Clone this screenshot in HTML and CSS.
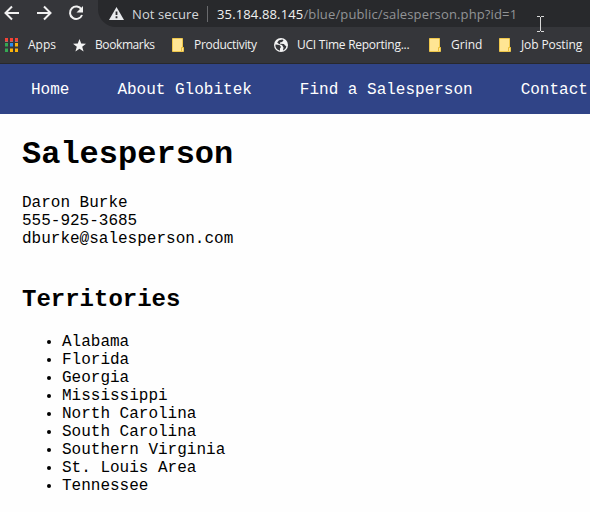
FILE: index.html
```html
<!DOCTYPE html>
<html lang="en">
<head>
<meta charset="utf-8">
<title>Salesperson</title>
<link rel="stylesheet" href="styles.css">
</head>
<body>
<header class="browser">
  <div class="toolbar">
    <svg class="nav-icons" width="98" height="27" viewBox="0 0 98 27" fill="none" stroke="#f1f1f1" stroke-width="2">
      <path d="M19 13H6M12 6.500L5.500 13l6.500 6.500M37 13h13M44 6.500l6.500 6.500-6.500 6.500"/>
      <path d="M81.500 9.500A6.200 6.200 0 1 0 82 15"/>
      <path d="M83 6v6.500h-6.500z" fill="#f1f1f1" stroke="none"/>
    </svg>
    <div class="address">
      <svg class="warning" width="15" height="13" viewBox="0 0 15 13"><path d="M7.500 0L15 13H0z" fill="#e8eaed"/><path d="M7.500 4.500v3.500M7.500 9.300v2" stroke="#28292c" stroke-width="1.800"/></svg>
      <span class="security">Not secure</span>
      <span class="divider"></span>
      <span class="url"><b class="host">35.184.88.145</b><span class="path">/blue/public/salesperson.php?id=1</span></span>
    </div>
    <svg class="cursor" width="7" height="16" viewBox="0 0 7 16" fill="none" stroke="#d8d8d8"><path d="M0 .5h3M4 .5h3M3.500 1v14M0 15.500h3M4 15.500h3"/></svg>
  </div>
  <nav class="bookmarks">
    <span class="bookmark apps">
      <svg width="13" height="14" viewBox="0 0 13 14"><path d="M0 0h3v3H0zM5 0h3v3H5zM10 0h3v3h-3z" fill="#f44336"/><path d="M0 5h3v3.500H0z" fill="#34a853"/><path d="M5 5h3v3.500H5z" fill="#2b8cf0"/><path d="M10 5h3v3.500h-3zM5 10.500h3V14H5zM10 10.500h3V14h-3z" fill="#fbb30b"/><path d="M0 10.500h3V14H0z" fill="#34a853"/><path d="M0 3.500h3M5 3.500h3M10 3.500h3" stroke="#a57070"/></svg>
      <span class="label">Apps</span>
    </span>
    <span class="bookmark starred">
      <svg width="13" height="13" viewBox="0 0 13 13"><path d="M6.500 0l1.700 4.500 4.800.2-3.800 3 1.400 4.800-4.100-2.800-4.100 2.800 1.400-4.800-3.800-3 4.800-.2z" fill="#f4f4f4"/></svg>
      <span class="label">Bookmarks</span>
    </span>
    <span class="bookmark productivity">
      <svg width="12" height="14" viewBox="0 0 12 14"><path d="M.5.5h10v9h1v4H.5z" fill="#ffe593" stroke="#efc74b"/><path d="M9.500 13V9.500h2" fill="none" stroke="#e9bd36"/></svg>
      <span class="label">Productivity</span>
    </span>
    <span class="bookmark reporting">
      <svg width="14" height="14" viewBox="0 0 14 14"><circle cx="7" cy="7" r="7" fill="#f3f3f3"/><path d="M1.500 6.500l4 .5 1.500 2-1 1.500v2.200C3 12 1 9.500 1.500 6.500zM5 2.200L8.500 1.500l1 1-1.500 1.500-2 .5v1.200l4 .3 1 1.500 1.300.5c0 2-1.500 3.700-3.300 4.500L9.500 9.500 8 7 5 6 3.200 4.500z" fill="#35363a"/></svg>
      <span class="label">UCI Time Reporting...</span>
    </span>
    <span class="bookmark grind">
      <svg width="12" height="14" viewBox="0 0 12 14"><path d="M.5.5h10v9h1v4H.5z" fill="#ffe593" stroke="#efc74b"/><path d="M9.500 13V9.500h2" fill="none" stroke="#e9bd36"/></svg>
      <span class="label">Grind</span>
    </span>
    <span class="bookmark jobs">
      <svg width="12" height="14" viewBox="0 0 12 14"><path d="M.5.5h10v9h1v4H.5z" fill="#ffe593" stroke="#efc74b"/><path d="M9.500 13V9.500h2" fill="none" stroke="#e9bd36"/></svg>
      <span class="label">Job Posting</span>
    </span>
  </nav>
</header>
<nav class="site-nav">
  <a>Home</a><a>About Globitek</a><a>Find a Salesperson</a><a>Contact</a>
</nav>
<main class="content">
  <h1>Salesperson</h1>
  <address>Daron Burke<br>555-925-3685<br>dburke@salesperson.com</address>
  <h2>Territories</h2>
  <ul>
    <li>Alabama</li>
    <li>Florida</li>
    <li>Georgia</li>
    <li>Mississippi</li>
    <li>North Carolina</li>
    <li>South Carolina</li>
    <li>Southern Virginia</li>
    <li>St. Louis Area</li>
    <li>Tennessee</li>
  </ul>
</main>
</body>
</html>
```
FILE: styles.css
```css
* { box-sizing: border-box; }
body {
  margin: 0;
  height: 512px;
  overflow: hidden;
  background: #fefefe;
  color: #000;
  font: 16px/18px "Liberation Mono", monospace;
}
svg { display: block; flex: none; }
.browser {
  height: 64px;
  background: #35363a;
  border-bottom: 1px solid #28292c;
  font-family: "Open Sans", "Noto Sans", sans-serif;
  white-space: nowrap;
}
.toolbar { position: relative; display: flex; height: 27px; }
.address {
  display: flex;
  flex: 1;
  align-items: center;
  height: 27px;
  padding-left: 11px;
  background: #28292c;
  border-bottom-left-radius: 18px;
  font-size: 13px;
  line-height: 26px;
}
.security { width: 67px; margin-left: 8px; color: #d5d7da; letter-spacing: .1px; }
.divider { width: 1px; height: 16px; margin: 0 9px 0 8px; background: #696a6d; }
.url { color: #929496; letter-spacing: .14px; }
.host { color: #f1f1f1; font-weight: 400; }
.cursor { position: absolute; left: 537px; top: 16px; }
.bookmarks { display: flex; height: 36px; padding-left: 5px; color: #f1f1f1; font-size: 12px; line-height: 36px; }
.bookmark { display: flex; flex: none; align-items: center; gap: 10px; }
.apps { width: 68px; }
.starred { width: 99px; gap: 9px; letter-spacing: -.4px; }
.starred .label { letter-spacing: -.4px; }
.productivity { width: 102px; letter-spacing: -.3px; }
.reporting { width: 155px; gap: 9px; letter-spacing: -.25px; }
.grind { width: 70px; }
.jobs { letter-spacing: -.1px; }
.site-nav {
  display: flex;
  align-items: center;
  gap: 48px;
  height: 50px;
  padding: 2px 0 0 31px;
  overflow: hidden;
  background: #304487;
  color: #fff;
  white-space: nowrap;
}
.site-nav a { flex: none; }
.content { padding: 23px 22px 0; }
h1 { margin: 0 0 21px; font-size: 32px; line-height: 36px; }
address { font-style: normal; }
h2 { margin: 38px 0 20px; font-size: 24px; line-height: 27px; }
ul { margin: 0; padding-left: 40px; }
```
